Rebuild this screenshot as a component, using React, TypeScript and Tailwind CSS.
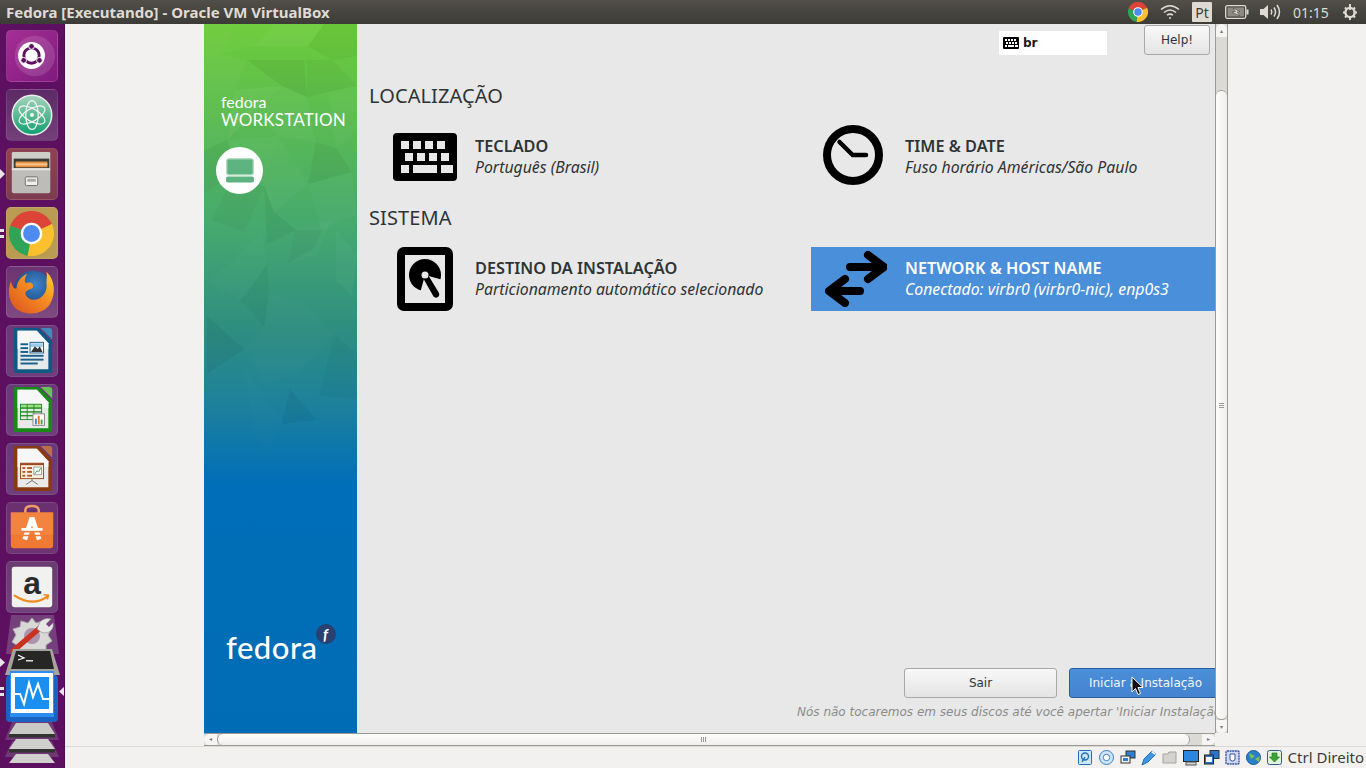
import type { ReactNode } from 'react';

const polys: [string, string][] = [
  ['0,0 30,0 18,30 0,42', 'rgba(255,255,255,0.07)'],
  ['30,0 70,0 50,22 18,30', 'rgba(255,255,255,0.04)'],
  ['70,0 120,0 104,22 50,22', 'rgba(255,255,255,0.09)'],
  ['120,0 153,0 153,32 128,36 104,22', 'rgba(0,0,0,0.05)'],
  ['43,36 100,36 103,73 78,62', 'rgba(0,0,0,0.08)'],
  ['0,42 18,30 43,36 30,66 0,70', 'rgba(255,255,255,0.06)'],
  ['103,36 128,36 153,62 124,68 103,73', 'rgba(0,0,0,0.05)'],
  ['78,62 103,73 112,118 74,112 50,88', 'rgba(255,255,255,0.06)'],
  ['30,66 78,62 50,88 24,116', 'rgba(255,255,255,0.09)'],
  ['0,70 30,66 24,116 0,126', 'rgba(255,255,255,0.03)'],
  ['124,68 153,62 153,108 132,124', 'rgba(255,255,255,0.05)'],
  ['112,118 132,124 148,148 104,160', 'rgba(0,0,0,0.07)'],
  ['24,116 74,112 60,162 30,150', 'rgba(255,255,255,0.06)'],
  ['0,126 24,116 30,150 0,170', 'rgba(0,0,0,0.05)'],
  ['74,112 104,160 70,188 60,162', 'rgba(255,255,255,0.05)'],
  ['104,160 148,148 153,190 118,206', 'rgba(255,255,255,0.04)'],
  ['30,150 60,162 40,208 8,196', 'rgba(0,0,0,0.04)'],
  ['60,162 70,188 92,206 63,220', 'rgba(0,0,0,0.07)'],
  ['88,206 128,196 112,232 84,240', 'rgba(255,255,255,0.04)'],
  ['58,207 63,241 37,276 5,258', 'rgba(255,255,255,0.03)'],
  ['63,241 37,276 60,303 65,270', 'rgba(0,0,0,0.05)'],
  ['90,206 118,206 110,224 84,240', 'rgba(0,0,0,0.06)'],
  ['132,206 153,230 148,272 132,256', 'rgba(255,255,255,0.05)'],
  ['3,292 40,325 3,350', 'rgba(0,0,0,0.07)'],
  ['60,303 92,350 60,360 40,325', 'rgba(255,255,255,0.03)'],
  ['65,270 100,280 130,310 92,350 60,303', 'rgba(255,255,255,0.03)'],
  ['130,310 153,330 153,375 115,372', 'rgba(0,0,0,0.04)'],
  ['86,365 113,396 78,400', 'rgba(0,0,0,0.07)'],
  ['40,340 78,400 64,430 50,410', 'rgba(255,255,255,0.02)'],
];

function ChromeLogo({ className }: { className: string }) {
  return (
    <svg viewBox="-24 -24 48 48" className={className}>
      <path d="M0 0L-22.6-8.2A24 24 0 0 1 21.8-10.1Z" fill="#db4437" />
      <path d="M0 0L21.8-10.1A24 24 0 0 1-4.2 23.6Z" fill="#fbc02d" />
      <path d="M0 0L-4.2 23.6A24 24 0 0 1-22.6-8.2Z" fill="#2fa457" />
      <circle r="11.5" fill="#fff" />
      <circle r="9" fill="#4d8bf0" />
    </svg>
  );
}

function Tile({ bg, pip, children }: { bg: string; pip?: 'arrow' | 'double'; children: ReactNode }) {
  return (
    <div className="relative w-full h-[52px] flex justify-center shrink-0">
      {pip === 'arrow' && <div className="absolute left-0 top-[21px] w-0 h-0 border-y-[5px] border-y-transparent border-l-[5px] border-l-[#e8e4e8]" />}
      {pip === 'double' && (
        <div className="absolute left-0 top-[22px] flex flex-col gap-[3px]">
          <div className="w-1 h-[3px] bg-[#e8e4e8]" />
          <div className="w-1 h-[3px] bg-[#e8e4e8]" />
        </div>
      )}
      <div className={`w-[52px] h-[52px] rounded-[5px] border border-white/10 overflow-hidden ${bg}`}>{children}</div>
    </div>
  );
}

function Doc({ color, corner, children }: { color: string; corner: string; children: ReactNode }) {
  return (
    <svg viewBox="0 0 52 52" className="w-full h-full">
      <path d="M7 2H33L47 16V46Q47 49 44 49H10Q7 49 7 46Z" fill={color} />
      <path d="M35 2H44Q47 2 47 5V14Z" fill={corner} />
      <path d="M11 5H31L43 18V45H11Z" fill="#e9e9e9" />
      <path d="M11 5H31L43 18V24H11Z" fill="#f7f7f7" />
      {children}
    </svg>
  );
}

function Launcher() {
  return (
    <div className="w-[65px] shrink-0 bg-[#5e1060] border-r border-[#4c0c4e] flex flex-col pt-[6px] gap-[7px] overflow-hidden">
      <div className="flex flex-col gap-[7px] pr-[1px]">
        <Tile bg="bg-gradient-to-br from-[#a62f94] to-[#7f1a7e]">
          <svg viewBox="0 0 52 52" className="w-full h-full">
            <circle cx="29" cy="26" r="21" fill="#fff" opacity="0.13" />
            <circle cx="25.5" cy="25.5" r="14" fill="#fff" />
            <circle cx="25.5" cy="25.5" r="8" fill="none" stroke="#5e1060" strokeWidth="3" />
            <circle cx="25.5" cy="16" r="3" fill="#5e1060" stroke="#fff" />
            <circle cx="17.3" cy="30.5" r="3" fill="#5e1060" stroke="#fff" />
            <circle cx="33.7" cy="30.5" r="3" fill="#5e1060" stroke="#fff" />
          </svg>
        </Tile>
        <Tile bg="bg-gradient-to-b from-[#5c2a66] to-[#74407c]">
          <svg viewBox="0 0 52 52" className="w-full h-full">
            <defs>
              <linearGradient id="atomg" x1="0" y1="0" x2="0" y2="1">
                <stop offset="0" stopColor="#a7d3bd" />
                <stop offset="1" stopColor="#10a070" />
              </linearGradient>
            </defs>
            <circle cx="26" cy="26" r="20.5" fill="url(#atomg)" stroke="#e8efe9" strokeWidth="1.6" />
            <g fill="none" stroke="#f2f7f2" strokeWidth="1.3">
              <ellipse cx="26" cy="26" rx="15" ry="6.5" transform="rotate(30 26 26)" />
              <ellipse cx="26" cy="26" rx="15" ry="6.5" transform="rotate(-30 26 26)" />
              <ellipse cx="26" cy="26" rx="15" ry="6.5" transform="rotate(90 26 26)" />
            </g>
            <circle cx="26" cy="26" r="2" fill="#fff" />
          </svg>
        </Tile>
        <Tile bg="bg-gradient-to-b from-[#8e4252] to-[#7d3c50]" pip="arrow">
          <svg viewBox="0 0 52 52" className="w-full h-full">
            <rect x="5" y="3" width="40" height="18" rx="1.5" fill="#cfcdc8" />
            <rect x="7" y="10" width="37" height="10" fill="#3b3a38" />
            <rect x="9" y="13" width="33" height="6" fill="#e8913f" />
            <rect x="9" y="15" width="33" height="2" fill="#f6c78f" />
            <path d="M5 20H45V44Q45 46 43 46H7Q5 46 5 44Z" fill="#bdbcb8" />
            <path d="M5 20H45V22H5Z" fill="#e6e5e2" />
            <rect x="19" y="29" width="13" height="9" rx="1.5" fill="#f0efec" stroke="#6d6c69" strokeWidth="1" />
            <rect x="21" y="31" width="9" height="3" fill="#a9a8a5" />
          </svg>
        </Tile>
        <Tile bg="bg-[#b99c52]" pip="double">
          <div className="w-full h-full flex items-center justify-center">
            <ChromeLogo className="w-[45px] h-[45px]" />
          </div>
        </Tile>
        <Tile bg="bg-gradient-to-b from-[#6c3472] to-[#7e4a80]">
          <svg viewBox="0 0 52 52" className="w-full h-full">
            <defs>
              <radialGradient id="ffg" cx="0.55" cy="0.35" r="0.7">
                <stop offset="0" stopColor="#3f86c8" />
                <stop offset="1" stopColor="#143a78" />
              </radialGradient>
              <linearGradient id="fff" x1="1" y1="0" x2="0" y2="1">
                <stop offset="0" stopColor="#fcd52f" />
                <stop offset="0.45" stopColor="#f58a23" />
                <stop offset="1" stopColor="#d9501e" />
              </linearGradient>
            </defs>
            <circle cx="27" cy="24" r="20" fill="url(#ffg)" />
            <path d="M41 5C50 13 51 28 45 38C38 50 20 51 10 44C2 37 0 25 4 15C6 22 8 23 10 22C10 16 14 10 21 7C18 12 18 15 20 17C24 15 28 17 27 21C25 24 20 23 19 27C20 33 27 36 33 33C39 30 42 24 41 17C41 12 42 9 41 5Z" fill="url(#fff)" />
          </svg>
        </Tile>
        <Tile bg="bg-gradient-to-b from-[#6a3a78] to-[#6e3f7c]">
          <Doc color="#0e5a84" corner="#3f8cb8">
            <g fill="#17608f">
              <rect x="14" y="18" width="8" height="2" />
              <rect x="14" y="22" width="8" height="2" />
              <rect x="14" y="26" width="8" height="2" />
              <rect x="14" y="30" width="24" height="2" />
              <rect x="14" y="34" width="24" height="2" />
              <rect x="14" y="38" width="18" height="2" />
            </g>
            <rect x="24" y="17" width="14" height="11" fill="#fff" stroke="#17608f" />
            <path d="M25 27L29 21L32 24L34 21L37 27Z" fill="#333" />
            <rect x="25" y="18" width="12" height="4" fill="#5fa9d8" opacity="0.6" />
          </Doc>
        </Tile>
        <Tile bg="bg-gradient-to-b from-[#6a3a78] to-[#6e3f7c]">
          <Doc color="#178a17" corner="#6cc25a">
            <g fill="#9fdc8a" stroke="#178a17" strokeWidth="0.9">
              <rect x="14" y="20" width="22" height="4" />
              <rect x="14" y="24" width="22" height="4" fill="none" />
              <rect x="14" y="28" width="22" height="4" fill="none" />
              <rect x="14" y="32" width="22" height="4" fill="none" />
              <path d="M21 20V36M28 20V36" fill="none" />
            </g>
            <rect x="27" y="30" width="12" height="12" fill="#fff" stroke="#888" />
            <rect x="29" y="35" width="2" height="6" fill="#2e8bd6" />
            <rect x="32" y="32" width="2" height="9" fill="#e8751d" />
            <rect x="35" y="36" width="2" height="5" fill="#3fa54a" />
          </Doc>
        </Tile>
        <Tile bg="bg-gradient-to-b from-[#6a3a78] to-[#6e3f7c]">
          <Doc color="#8a3a12" corner="#b9704a">
            <rect x="14" y="20" width="24" height="16" fill="#fbeee2" stroke="#9c4a1c" />
            <rect x="14" y="20" width="24" height="2" fill="#9c4a1c" />
            <g fill="#b35a2a">
              <rect x="16" y="24" width="3" height="2" />
              <rect x="21" y="24" width="5" height="2" />
              <rect x="16" y="28" width="3" height="2" />
              <rect x="21" y="28" width="5" height="2" />
              <rect x="16" y="32" width="3" height="2" />
              <rect x="21" y="32" width="5" height="2" />
            </g>
            <rect x="28" y="24" width="8" height="8" fill="#fff" stroke="#777" strokeWidth="0.7" />
            <path d="M29 31L31 28L33 29L35 25" fill="none" stroke="#3fa54a" />
            <path d="M26 36V38M26 38L20 42M26 38L32 42" stroke="#777" fill="none" />
          </Doc>
        </Tile>
        <Tile bg="bg-gradient-to-b from-[#6b3070] to-[#6f3473]">
          <svg viewBox="0 0 52 52" className="w-full h-full">
            <path d="M19 13V8Q19 3 26 3T33 8V13" fill="none" stroke="#ef9a6a" strokeWidth="2.6" />
            <path d="M4 10H48V44Q48 47 45 47H7Q4 47 4 44Z" fill="#ef7a33" />
            <path d="M4 10H48V33H4Z" fill="#f2843f" />
            <path d="M26 15L18.5 38M26 15L33.5 38" fill="none" stroke="#fff" strokeWidth="5" />
            <rect x="15" y="26" width="22" height="3" fill="#fff" />
            <rect x="15" y="29" width="22" height="1.6" fill="#ef7a33" />
            <rect x="15" y="33" width="22" height="1.6" fill="#ef7a33" />
          </svg>
        </Tile>
        <Tile bg="bg-gradient-to-b from-[#6a3a72] to-[#70417a]">
          <svg viewBox="0 0 52 52" className="w-full h-full">
            <rect x="5" y="5" width="42" height="42" rx="2.5" fill="#f1f1ef" />
            <text x="26" y="33" textAnchor="middle" fontFamily="Liberation Sans, sans-serif" fontWeight="700" fontSize="33" fill="#2b2b2b">a</text>
            <path d="M8 35Q26 47 42 36" fill="none" stroke="#f08a1d" strokeWidth="2.4" strokeLinecap="round" />
            <path d="M38 34L43 34.5L42 39" fill="none" stroke="#f08a1d" strokeWidth="1.6" />
          </svg>
        </Tile>
      </div>
      <svg viewBox="0 0 65 148" className="w-[65px] h-[148px] shrink-0 -mt-[5px]">
        <path d="M11 0H54L59 39H6Z" fill="#743f7a" />
        <path d="M32 3L36 8L43 6L44 12L51 14L48 20L52 26L46 30L46 38H18L18 31L12 27L16 20L13 14L20 12L21 6L28 8Z" fill="#d8d8d6" stroke="#a9a9a9" />
        <circle cx="32" cy="21" r="8" fill="#5e1060" opacity="0.35" />
        <path d="M13 36L41 12" stroke="#c8321f" strokeWidth="5.5" strokeLinecap="round" />
        <path d="M37 14L40 7Q45 2 51 4L46 9L49 12L53 8Q54 14 49 17Q44 19 41 17Z" fill="#e6e6e6" stroke="#999" strokeWidth="0.7" />
        <path d="M13 34H52L60 60H5Z" fill="#a5a39d" />
        <path d="M16 36H50L54 54H11Z" fill="#262624" />
        <path d="M18 40L24 43L18 45" fill="none" stroke="#fff" strokeWidth="1.2" />
        <rect x="26" y="45" width="7" height="1.5" fill="#ddd" />
        <path d="M0 43L5 47.5L0 52Z" fill="#e8e4e8" />
        <rect x="6" y="60" width="52" height="47" rx="4" fill="#1a63c2" />
        <rect x="10" y="56" width="44" height="46" fill="#2d8df0" />
        <rect x="11" y="58" width="42" height="40" fill="#fff" />
        <rect x="15" y="62" width="34" height="32" fill="#1b8ff0" />
        <path d="M15 79H20L24 89L29 68L33 82L38 69L43 84H49" fill="none" stroke="#fff" strokeWidth="2" />
        <rect x="0" y="72" width="4" height="3" fill="#e8e4e8" />
        <rect x="0" y="78" width="4" height="3" fill="#e8e4e8" />
        <path d="M64 72L59 76.5L64 81Z" fill="#e8e4e8" />
        <path d="M12 107H52L59 125H5Z" fill="#6f3a74" />
        <path d="M16 108H48L55 119H9Z" fill="#c9c9c5" />
        <rect x="9" y="119" width="46" height="3.5" fill="#333" />
        <path d="M12 126H52L59 142H5Z" fill="#6f3a74" />
        <path d="M16 124H48L55 134H9Z" fill="#d0d0cc" />
        <rect x="9" y="134" width="46" height="3.5" fill="#333" />
        <path d="M16 139H48L55 148H9Z" fill="#d0d0cc" />
      </svg>
    </div>
  );
}

function TopBar() {
  return (
    <div className="h-6 shrink-0 flex items-center bg-gradient-to-b from-[#524f48] to-[#3c3b37] pl-[6px]">
      <span className="font-['Noto_Sans',sans-serif] font-bold text-[15px] text-[#dfdbd2]">Fedora [Executando] - Oracle VM VirtualBox</span>
      <div className="ml-auto flex items-center">
        <ChromeLogo className="w-5 h-5" />
        <svg viewBox="0 0 20 16" className="w-5 h-4 ml-3" fill="none" stroke="#dfdbd2" strokeWidth="1.6">
          <path d="M1 5.5Q10-2 19 5.5" />
          <path d="M4 8.5Q10 3.5 16 8.5" />
          <path d="M7 11.2Q10 9 13 11.2" />
          <circle cx="10" cy="14" r="1" fill="#dfdbd2" stroke="none" />
        </svg>
        <div className="w-5 h-5 ml-3 bg-[#dfdbd2] rounded-[1px] flex items-center justify-center font-['Noto_Sans',sans-serif] text-[14px] text-[#3c3b37]">Pt</div>
        <svg viewBox="0 0 24 14" className="w-6 h-[14px] ml-[13px]">
          <rect x="0.7" y="0.7" width="20" height="12.6" rx="1.5" fill="none" stroke="#dfdbd2" strokeWidth="1.3" />
          <rect x="2.5" y="2.5" width="16.5" height="9" fill="#8d8a83" />
          <rect x="21.5" y="4.5" width="2" height="5" fill="#dfdbd2" />
          <path d="M8 3L15 6.5L12 7L15 11L7 7L10.5 6.5Z" fill="#dfdbd2" stroke="#3c3b37" strokeWidth="0.5" />
        </svg>
        <svg viewBox="0 0 21 16" className="w-[21px] h-4 ml-[11px]" fill="none" stroke="#dfdbd2" strokeWidth="1.5">
          <path d="M0 5H3.5L8 1V15L3.5 11H0Z" fill="#dfdbd2" stroke="none" />
          <path d="M11 5.5Q12.5 8 11 10.5" />
          <path d="M14 3.5Q17 8 14 12.5" />
          <path d="M17 1Q22 8 17 15" />
        </svg>
        <span className="w-9 ml-3 font-['Noto_Sans',sans-serif] text-[14px] text-[#dfdbd2] whitespace-nowrap">01:15</span>
        <svg viewBox="0 0 16 16" className="w-4 h-4 ml-[13px] mr-2" fill="none" stroke="#dfdbd2">
          <circle cx="8" cy="8.5" r="4.6" strokeWidth="2.4" />
          <path d="M8 0V6" strokeWidth="1.8" />
          <path d="M8 0.5V3M8 14V16M1 8.5H3M13 8.5H15M3 3.5L4.5 5M13 3.5L11.5 5M3 13.5L4.5 12M13 13.5L11.5 12" strokeWidth="2" />
        </svg>
      </div>
    </div>
  );
}

function Spoke({ icon, title, sub, active }: { icon: ReactNode; title: string; sub: string; active?: boolean }) {
  return (
    <div className={`h-16 flex items-center ${active ? 'bg-[#4a8fd9] text-white' : 'text-[#2e3436]'}`}>
      <div className="w-[94px] shrink-0 flex">{icon}</div>
      <div className="flex flex-col whitespace-nowrap">
        <span className="text-[16.3px] leading-[21px] font-semibold">{title}</span>
        <span className="text-[15.8px] leading-[21px] italic">{sub}</span>
      </div>
    </div>
  );
}

function Sidebar() {
  return (
    <div className="relative w-[153px] shrink-0 bg-[linear-gradient(180deg,#6dcc39_0%,#45a86f_29%,#2e8e80_43%,#1f829a_53%,#006eb8_65%,#006cb6_100%)] overflow-hidden flex flex-col text-white">
      <svg viewBox="0 0 153 470" className="absolute left-0 top-0 w-[153px] h-[470px] opacity-60">
        {polys.map(([p, c]) => <polygon key={p} points={p} fill={c} />)}
      </svg>
      <div className="relative flex flex-col pl-[17px] pt-[70px]">
        <span className="font-['Lato',sans-serif] text-[16px] leading-[16px]">fedora</span>
        <span className="font-['Lato',sans-serif] text-[17px] leading-[18px] tracking-[0.2px] mt-[1px] whitespace-nowrap">WORKSTATION</span>
        <div className="w-[47px] h-[47px] -ml-[5px] mt-[18px] rounded-full bg-white flex items-center justify-center">
          <svg viewBox="0 0 28 25" className="w-7 h-[25px]">
            <rect x="0.8" y="0.8" width="26.4" height="16" rx="2" fill="#5db480" stroke="#a8d8b8" strokeWidth="1.2" />
            <rect x="0" y="18.5" width="28" height="6" rx="2" fill="#5db480" />
          </svg>
        </div>
      </div>
      <div className="relative mt-auto mb-[70px] pl-[22px] flex items-start">
        <span className="font-['Lato',sans-serif] font-medium text-[31px] leading-[32px] tracking-[0.5px]">fedora</span>
        <div className="w-5 h-5 -ml-[2px] -mt-[7px] rounded-full bg-[#294172] flex items-center justify-center font-['Lato',sans-serif] italic font-bold text-[15px] leading-none text-white">f</div>
      </div>
    </div>
  );
}

function Panel() {
  return (
    <div className="flex-1 min-w-0 bg-[#e8e8e8] flex flex-col overflow-hidden font-['Noto_Sans',sans-serif]">
      <div className="h-[60px] shrink-0 flex items-start justify-end pr-[5px] gap-[37px] pt-[1px]">
        <div className="w-[108px] h-6 mt-[6px] bg-white flex items-center pl-1 gap-[4px] font-bold text-[12px] text-[#1a1a1a] font-['DejaVu_Sans',sans-serif]">
          <svg viewBox="0 0 16 12" className="w-4 h-3">
            <rect width="16" height="12" rx="1" fill="#000" />
            <path d="M2 2h2v2H2zM5 2h2v2H5zM8 2h2v2H8zM11 2h2v2h-2zM3 5h2v2H3zM6 5h2v2H6zM9 5h2v2H9zM12 5h2v2h-2zM2 8h2v2H2zM5 8h6v2H5zM12 8h3v2h-3z" fill="#fff" />
          </svg>
          br
        </div>
        <button className="w-[66px] h-[30px] rounded-[3px] border border-[#a8a8a8] bg-gradient-to-b from-[#f8f8f8] to-[#e4e4e4] font-['DejaVu_Sans',sans-serif] text-[12px] text-[#2e3436]">Help!</button>
      </div>
      <h2 className="h-6 pl-3 text-[20px] tracking-[0.1px] leading-6 font-normal text-[#2e3436]">LOCALIZAÇÃO</h2>
      <div className="mt-[17px] grid grid-cols-[430px_404px] pl-[24px]">
        <Spoke
          title="TECLADO"
          sub="Português (Brasil)"
          icon={
            <svg viewBox="0 0 64 48" className="w-16 h-12 ml-3">
              <rect width="64" height="48" rx="4" fill="#000" />
              <path d="M8 8h8v8H8zM20 8h8v8h-8zM32 8h8v8h-8zM44 8h8v8h-8zM12 20h8v8h-8zM24 20h8v8h-8zM36 20h8v8h-8zM48 20h8v8h-8zM8 32h8v8H8zM20 32h24v8H20zM48 32h12v8H48z" fill="#e8e8e8" />
            </svg>
          }
        />
        <Spoke
          title="TIME & DATE"
          sub="Fuso horário Américas/São Paulo"
          icon={
            <svg viewBox="0 0 60 60" className="w-[60px] h-[60px] ml-3 -mt-1">
              <circle cx="30" cy="30" r="26" fill="none" stroke="#000" strokeWidth="8" />
              <path d="M16.5 17L29.7 30H43" fill="none" stroke="#000" strokeWidth="4.5" strokeLinecap="round" />
            </svg>
          }
        />
      </div>
      <h2 className="h-6 mt-[17px] pl-3 text-[20px] tracking-[0.1px] leading-6 font-normal text-[#2e3436]">SISTEMA</h2>
      <div className="mt-[17px] grid grid-cols-[430px_404px] pl-[24px]">
        <Spoke
          title="DESTINO DA INSTALAÇÃO"
          sub="Particionamento automático selecionado"
          icon={
            <svg viewBox="0 0 56 64" className="w-14 h-16 ml-4">
              <rect width="56" height="64" rx="7" fill="#000" />
              <rect x="8" y="8" width="40" height="48" fill="#e8e8e8" />
              <circle cx="28" cy="28" r="16" fill="#000" />
              <path d="M28 28L46 33V50H22Z" fill="#e8e8e8" />
              <path d="M25.5 30L30.5 27L42 46Q43 49 40 50.5Q38 51 36.5 49.5Z" fill="#000" />
              <circle cx="28" cy="28" r="3.5" fill="#e8e8e8" />
            </svg>
          }
        />
        <Spoke
          active
          title="NETWORK & HOST NAME"
          sub="Conectado: virbr0 (virbr0-nic), enp0s3"
          icon={
            <svg viewBox="0 0 62 56" className="w-[62px] h-14 ml-[14px]">
              <path d="M25 16H58M43 4L59 16L43 28M35 40H5M20 28L4 40L20 52" fill="none" stroke="#000" strokeWidth="8" strokeLinecap="round" strokeLinejoin="round" />
            </svg>
          }
        />
      </div>
      <div className="mt-auto pb-[13px] flex flex-col">
        <div className="flex justify-end gap-3 -mr-[7px] font-['DejaVu_Sans',sans-serif] text-[12px]">
          <button className="w-[153px] h-[30px] rounded-[3px] border border-[#a8a8a8] bg-gradient-to-b from-[#f8f8f8] to-[#e4e4e4] text-[#2e3436]">Sair</button>
          <button className="w-[153px] h-[30px] rounded-[3px] border border-[#2a5f9e] bg-gradient-to-b from-[#4a8fd9] to-[#4483cf] text-[#f2f6fb]">Iniciar a Instalação</button>
        </div>
        <p className="mt-[6px] pl-[440px] h-4 leading-4 whitespace-nowrap font-['DejaVu_Sans',sans-serif] italic text-[12px] text-[#8a8c8c]">Nós não tocaremos em seus discos até você apertar 'Iniciar Instalação'.</p>
      </div>
    </div>
  );
}

const statusIcons: ReactNode[] = [
  <>
    <rect x="0.5" y="0.5" width="13" height="14" rx="1" fill="#cfe6f7" stroke="#1d6fb8" />
    <circle cx="7" cy="6.5" r="3.5" fill="none" stroke="#1d6fb8" strokeWidth="1.4" />
    <path d="M7 7L4 12" stroke="#1d6fb8" strokeWidth="1.4" />
  </>,
  <>
    <circle cx="7.5" cy="7.5" r="7" fill="#cfe3f6" stroke="#3b7fc2" />
    <circle cx="7.5" cy="7.5" r="3.2" fill="#fff" stroke="#3b7fc2" />
  </>,
  <>
    <rect x="6" y="1" width="9" height="7" fill="#2f7fd0" stroke="#333" />
    <rect x="1" y="6" width="9" height="7" fill="#f2f2f2" stroke="#333" />
    <rect x="3" y="8" width="5" height="3" fill="#2f7fd0" />
  </>,
  <>
    <path d="M1 15L3 9L11 1L15 4L7 12Z" fill="#3f95e0" stroke="#1d6fb8" />
    <path d="M10 2L14 5L15 4L12 1Z" fill="#fff" />
  </>,
  <>
    <path d="M1 4H6L7 2H14V13H1Z" fill="#d5d3cf" stroke="#a5a3a0" />
  </>,
  <>
    <rect x="0.5" y="0.5" width="15" height="11" fill="#2a86e0" stroke="#222" />
    <rect x="3" y="12" width="10" height="3" fill="#d5d3cf" stroke="#555" />
  </>,
  <>
    <rect x="6" y="0.5" width="9" height="8" fill="#2a76cc" stroke="#333" />
    <rect x="0.5" y="5" width="9" height="9" fill="#2a76cc" stroke="#222" />
    <rect x="2" y="7" width="6" height="5" fill="#f5f5f5" />
  </>,
  <>
    <rect x="1" y="1" width="13" height="13" rx="1" fill="#cfd8ef" stroke="#3b55a8" strokeWidth="1.4" strokeDasharray="2 0.6" />
    <path d="M5 4V9Q5 11 7.5 11T10 9V4Z" fill="#fff" stroke="#3b55a8" />
  </>,
  <>
    <circle cx="7.5" cy="7.5" r="7" fill="#2a7fc8" stroke="#185a96" />
    <path d="M3 3L9 6L5 9ZM9 9L14 6L13 12Z" fill="#7cc44d" />
  </>,
  <>
    <rect x="0.5" y="0.5" width="14" height="14" rx="2" fill="#e2f2da" stroke="#2f5f8f" />
    <path d="M5 3H10V7H12.5L7.5 12L2.5 7H5Z" fill="#3aa63a" stroke="#1f6a1f" strokeWidth="0.6" />
  </>,
];

export default function App() {
  return (
    <div className="w-[1366px] h-[768px] flex flex-col overflow-hidden bg-[#f2f1f0]">
      <TopBar />
      <div className="flex-1 min-h-0 flex">
        <Launcher />
        <div className="relative flex-1 min-w-0 flex flex-col">
          <div className="flex-1 min-h-0 flex pl-[139px]">
            <div className="w-[1011px] flex flex-col">
              <div className="flex-1 min-h-0 flex">
                <Sidebar />
                <Panel />
              </div>
              {/* horizontal scrollbar */}
              <div className="h-[13px] shrink-0 flex bg-[#dcdad5] border-y border-[#9c9a97]">
                <div className="w-[13px] bg-[#f6f5f4] rounded-l-full flex items-center justify-center text-[6px] text-[#777]">◂</div>
                <div className="flex-1 bg-gradient-to-b from-[#fdfdfc] to-[#efeeec] rounded-full border-x border-[#9c9a97] flex items-center justify-center">
                  <div className="flex gap-[1px]">
                    <div className="w-[1px] h-[5px] bg-[#999]" />
                    <div className="w-[1px] h-[5px] bg-[#999]" />
                    <div className="w-[1px] h-[5px] bg-[#999]" />
                  </div>
                </div>
                <div className="w-3" />
                <div className="w-[13px] bg-[#f6f5f4] rounded-r-full flex items-center justify-center text-[6px] text-[#777]">▸</div>
              </div>
            </div>
            {/* vertical scrollbar */}
            <div className="w-[13px] shrink-0 mb-[13px] flex flex-col bg-[#dcdad5] border-x border-[#9c9a97]">
              <div className="h-[13px] bg-[#f6f5f4] rounded-t-full flex items-center justify-center text-[6px] leading-none text-[#777]">▴</div>
              <div className="flex-1 pt-[53px] flex">
                <div className="flex-1 bg-gradient-to-r from-[#fdfdfc] to-[#efeeec] rounded-full border-y border-[#9c9a97] flex items-center justify-center">
                  <div className="flex flex-col gap-[1px]">
                    <div className="w-[5px] h-[1px] bg-[#999]" />
                    <div className="w-[5px] h-[1px] bg-[#999]" />
                    <div className="w-[5px] h-[1px] bg-[#999]" />
                  </div>
                </div>
              </div>
              <div className="h-[13px] bg-[#f6f5f4] rounded-b-full flex items-center justify-center text-[6px] leading-none text-[#777]">▾</div>
            </div>
            <div className="flex-1" />
          </div>
          {/* status bar */}
          <div className="h-[22px] shrink-0 border-t border-[#dcdad5] flex items-center justify-end pr-[2px]">
            <div className="flex items-center gap-[5px]">
              {statusIcons.map((s, i) => (
                <svg key={i} viewBox="0 0 16 16" className="w-4 h-4">{s}</svg>
              ))}
            </div>
            <span className="ml-[5px] font-['Noto_Sans',sans-serif] text-[15px] text-[#3c3b37] whitespace-nowrap">Ctrl Direito</span>
          </div>
          {/* mouse pointer */}
          <svg viewBox="0 0 14 20" className="absolute left-[1066px] top-[652px] w-[14px] h-5">
            <path d="M1 1V16L4.5 12.5L7 18.5L9.5 17.5L7 11.5H12Z" fill="#111" stroke="#fff" />
          </svg>
        </div>
      </div>
    </div>
  );
}
